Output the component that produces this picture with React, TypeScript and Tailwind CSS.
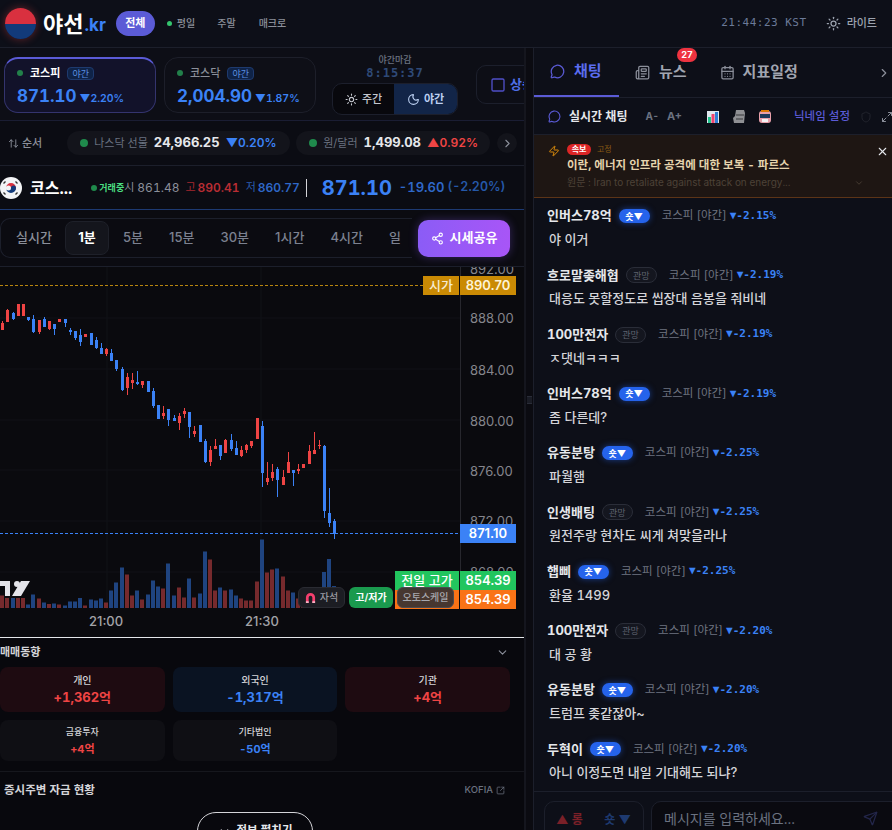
import React from 'react';
import {
  ArrowUpDown,
  CalendarDays,
  ChevronDown,
  ChevronRight,
  Maximize2,
  MessageCircle,
  Moon,
  Newspaper,
  Send,
  Share2,
  Shield,
  Square,
  SquareArrowOutUpRight,
  Sun,
  X,
  Zap,
} from 'lucide-react';

// [wick top, body top, body bottom, wick bottom, red?]
const candles: [number, number, number, number, number][] = [
  [322, 324, 331, 331, 1], [310, 311, 323, 323, 1], [313, 314, 320, 321, 0], [305, 305, 317, 317, 1], [305, 305, 317, 317, 1],
  [318, 318, 321, 322, 0], [316, 320, 333, 334, 0], [321, 321, 333, 335, 1], [318, 320, 328, 328, 0], [322, 322, 330, 331, 1],
  [325, 325, 330, 336, 0], [320, 320, 323, 323, 1], [320, 320, 324, 328, 0], [329, 331, 333, 336, 0], [332, 332, 339, 341, 0],
  [330, 336, 343, 347, 0], [335, 335, 338, 338, 1], [334, 334, 346, 346, 0], [338, 341, 349, 350, 0], [344, 349, 355, 355, 0],
  [349, 350, 355, 357, 1], [350, 354, 362, 362, 0], [361, 361, 370, 372, 0], [368, 370, 391, 392, 0], [374, 378, 389, 396, 1],
  [374, 381, 384, 390, 1], [372, 383, 385, 386, 0], [382, 382, 386, 389, 1], [382, 382, 393, 393, 0], [389, 392, 407, 409, 0],
  [406, 406, 420, 420, 0], [407, 414, 417, 420, 1], [410, 410, 421, 427, 0], [416, 419, 422, 422, 0], [414, 417, 424, 431, 1],
  [409, 412, 415, 419, 1], [413, 413, 428, 439, 0], [427, 432, 435, 438, 1], [426, 426, 443, 443, 0], [440, 442, 463, 464, 0],
  [447, 451, 463, 467, 1], [440, 447, 450, 450, 1], [446, 446, 457, 461, 0], [440, 441, 454, 454, 1], [435, 441, 450, 452, 0],
  [442, 449, 456, 456, 0], [447, 451, 457, 458, 1], [445, 446, 451, 454, 1], [442, 442, 447, 449, 1], [419, 419, 440, 440, 1],
  [422, 427, 474, 488, 0], [463, 479, 483, 486, 1], [465, 473, 479, 482, 1], [468, 470, 481, 498, 0], [471, 478, 486, 486, 1],
  [453, 463, 474, 474, 1], [471, 471, 474, 487, 0], [465, 470, 472, 475, 1], [465, 465, 469, 469, 1], [446, 452, 465, 465, 1],
  [433, 451, 455, 455, 1], [441, 446, 447, 450, 1], [446, 447, 512, 519, 0], [489, 514, 524, 528, 0], [520, 522, 535, 540, 0],
];

const volumes = [
  12.5, 10, 10, 10, 10, 3.5, 13.5, 9.5, 5.5, 4, 4.5, 3.5, 2.5, 6.5, 6.5, 10, 2.5, 8.5, 7.5, 9.5, 5.5, 17.5, 25.5, 40.5, 33.5, 12.5,
  17.5, 8.5, 13.5, 27.5, 21.5, 19.5, 44.5, 12.5, 20.5, 10.5, 29.5, 10.5, 14.5, 56.5, 48.5, 17.5, 20.5, 17.5, 18.5, 12.5, 9.5, 7.5,
  7.5, 26.5, 68.5, 35.5, 38.5, 39.5, 31.5, 17.5, 15.5, 9.5, 8, 5, 8, 6, 36, 49, 22,
];
const volumeColors = 'rrbrrbbrbrbrbbbbrbbbrbbbrrbrbbbrbbrrbrbbrrbrbbrrrrbrrbrrbrrrrrbbb';

const priceLabels = [
  ['892.00', 273],
  ['888.00', 322],
  ['884.00', 374],
  ['880.00', 425],
  ['876.00', 475],
  ['872.00', 525],
  ['868.00', 576],
];

const intervals = ['5분', '15분', '30분', '1시간', '4시간', '일'];

const chats = [
  { name: '인버스78억', pos: 'short', pct: '▼-2.15%', msg: '야 이거' },
  { name: '흐로말좆해협', pos: 'watch', pct: '▼-2.19%', msg: '대응도 못할정도로 씹장대 음봉을 줘비네' },
  { name: '100만전자', pos: 'watch', pct: '▼-2.19%', msg: 'ㅈ댓네ㅋㅋㅋ' },
  { name: '인버스78억', pos: 'short', pct: '▼-2.19%', msg: '좀 다른데?' },
  { name: '유동분탕', pos: 'short', pct: '▼-2.25%', msg: '파월햄' },
  { name: '인생배팅', pos: 'watch', pct: '▼-2.25%', msg: '원전주랑 현차도 씨게 쳐맞을라나' },
  { name: '햅삐', pos: 'short', pct: '▼-2.25%', msg: '환율 1499' },
  { name: '100만전자', pos: 'watch', pct: '▼-2.20%', msg: '대 공 황' },
  { name: '유동분탕', pos: 'short', pct: '▼-2.20%', msg: '트럼프 좆같잖아~' },
  { name: '두혁이', pos: 'short', pct: '▼-2.20%', msg: '아니 이정도면 내일 기대해도 되냐?' },
];

const Chart = () => (
  <div className="relative h-[370px] shrink-0 overflow-hidden bg-[#0a0a0e] [font-variant-numeric:normal]">
    <svg className="absolute inset-0" width="526" height="370" viewBox="0 268 526 370">
      {[319, 370, 421, 471, 522, 573].map((y) => (
        <line key={y} x1="0" x2="460" y1={y} y2={y} stroke="#101116" />
      ))}
      {[107, 261].map((x) => (
        <line key={x} x1={x} x2={x} y1="268" y2="610" stroke="#111217" />
      ))}
      <line x1="460.5" x2="460.5" y1="268" y2="610" stroke="#27272d" />
      <line x1="0" x2="423" y1="286.5" y2="286.5" stroke="#b9860f" strokeDasharray="3 2" />
      <line x1="0" x2="460" y1="534.5" y2="534.5" stroke="#3b82f6" strokeDasharray="3 2" />
      {volumes.map((h, i) => (
        <rect
          key={i}
          x={Math.round(2.3 + 5.19 * i) - 2}
          y={609 - h}
          width="4"
          height={h}
          fill={volumeColors[i] === 'r' ? '#762a2d' : '#1f4480'}
        />
      ))}
      {candles.map(([wt, bt, bb, wb, red], i) => {
        const x = Math.round(2.3 + 5.19 * i);
        const color = red ? '#ef4444' : '#3b82f6';
        return (
          <g key={i}>
            <rect x={x} y={wt} width="1" height={wb - wt} fill={color} />
            <rect x={x - 1} y={bt} width="3" height={bb - bt} fill={color} />
          </g>
        );
      })}
      {/* tradingview mark */}
      <path d="M0 582h10v15H5v-10H0z" fill="#e4e4ea" />
      <circle cx="17" cy="585" r="3" fill="#e4e4ea" />
      <path d="M21 582h9l-9 15h-9z" fill="#e4e4ea" />
    </svg>

    {priceLabels.map(([label, y]) => (
      <span
        key={label}
        className="absolute left-[470px] text-[13px] leading-[16px] text-[#85858c]"
        style={{ top: (y as number) - 268 - 11 }}
      >
        {label}
      </span>
    ))}

    <span className="absolute left-[89px] top-[346px] text-[13px] font-medium leading-[16px] text-[#a3a3a8]">21:00</span>
    <span className="absolute left-[245px] top-[346px] text-[13px] font-medium leading-[16px] text-[#a3a3a8]">21:30</span>

    <div className="absolute left-[423px] top-[9px] flex">
      <span className="flex h-[19px] w-[36px] items-center justify-center bg-[#ca8a04] text-[13px] font-medium text-[#f7ecd0]">시가</span>
      <span className="ml-px flex h-[19px] w-[56px] items-center justify-center bg-[#ca8a04] text-[13px] font-semibold text-[#fdf3d6]">890.70</span>
    </div>
    <span className="absolute left-[460px] top-[257px] flex h-[19px] w-[56px] items-center justify-center bg-[#3b82f6] text-[13px] font-semibold text-white">871.10</span>
    <div className="absolute left-[395px] top-[304px] flex">
      <span className="flex h-[19px] w-[64px] items-center justify-center bg-[#22c55e] text-[13px] font-medium text-white">전일 고가</span>
      <span className="ml-px flex h-[19px] w-[56px] items-center justify-center bg-[#22c55e] text-[13px] font-semibold text-white">854.39</span>
    </div>
    <div className="absolute left-[395px] top-[323px] flex">
      <span className="h-[19px] w-[64px] bg-[#f97316]" />
      <span className="ml-px flex h-[19px] w-[56px] items-center justify-center bg-[#f97316] text-[13px] font-semibold text-white">854.39</span>
    </div>

    <div className="absolute left-[298px] top-[320px] flex gap-1">
      <div className="flex h-[21px] w-[47px] items-center justify-center gap-1 rounded-md border border-[#2a2b32] bg-[#1c1d23] text-[10px] font-medium text-[#9a9aa2]">
        <svg width="11" height="11" viewBox="0 0 12 12">
          <path d="M1 12V6a5 5 0 0 1 10 0v6H8V6a2 2 0 0 0-4 0v6z" fill="#f43f6e" />
          <path d="M1 12V10h3v2zM8 12v-2h3v2z" fill="#f8b4c6" />
        </svg>
        자석
      </div>
      <div className="flex h-[21px] w-[44px] items-center justify-center rounded-md bg-[#1a9a4e] text-[10px] font-semibold text-white">고/저가</div>
      <div className="flex h-[21px] w-[57px] items-center justify-center rounded-md border border-[#4a4a50] bg-[#3d3431]/95 text-[10px] font-medium text-[#a8a8ae]">오토스케일</div>
    </div>
  </div>
);

const MarketCard = ({ name, value, pct, active }: { name: string; value: string; pct: string; active?: boolean }) => (
  <div
    className={
      active
        ? 'h-[56px] w-[152px] shrink-0 rounded-[14px] border border-[#34346e] border-t-2 border-t-[#5b5bd6] bg-[#12122a] pl-[12px] pt-[6px]'
        : 'h-[56px] w-[152px] shrink-0 rounded-[14px] border border-[#1d1f2a] bg-[#0e0f17] pl-[12px] pt-[7px]'
    }
  >
    <div className="flex items-center">
      <span className="mr-[7px] h-[6px] w-[6px] rounded-full bg-[#22804a]" />
      <span className={active ? 'text-[11px] font-bold text-white' : 'text-[11px] font-medium text-[#8b8f9a]'}>{name}</span>
      <span className="ml-[7px] rounded-[4px] border border-[#1e3a6e] bg-[#0f2347] px-[4px] text-[9px] leading-[11px] text-[#5b8fe0]">야간</span>
    </div>
    <div className="mt-[3px] flex items-baseline">
      <span className="text-[17px] font-bold leading-[22px] text-[#3b82f6]">{value}</span>
      <span className="ml-[3px] text-[10.5px] font-semibold text-[#3b82f6]">▼{pct}</span>
    </div>
  </div>
);

const Trade = ({ label, value, tone, small }: { label: string; value: string; tone: string; small?: boolean }) => (
  <div
    className={
      (small ? 'h-[41px] bg-[#0f0f14] ' : tone === 'red' ? 'h-[45px] bg-[#1e0b11] ' : 'h-[45px] bg-[#0a1322] ') +
      'flex flex-col items-center rounded-[8px] ' +
      (small ? 'pt-[5px]' : 'pt-[6px]')
    }
  >
    <span className={small ? 'text-[9px] font-medium leading-[14px] text-[#d4d4d8]' : 'text-[10px] font-medium leading-[14px] text-[#d4d4d8]'}>{label}</span>
    <span
      className={
        (small ? 'mt-[1px] text-[11px] ' : 'mt-[1px] text-[13px] ') +
        'font-bold leading-[18px] ' +
        (tone === 'red' ? 'text-[#ef4444]' : 'text-[#3b82f6]')
      }
    >
      {value}
    </span>
  </div>
);

const ChatRow = ({ name, pos, pct, msg }: { name: string; pos: string; pct: string; msg: string }) => (
  <div className="h-[59.25px] shrink-0 pl-[13px] pt-[1px]">
    <div className="flex h-[18px] items-center">
      <span className="text-[13px] font-bold text-[#e5e7eb]">{name}</span>
      {pos === 'short' ? (
        <span className="ml-[7px] flex h-[14px] w-[31px] items-center justify-center rounded-full bg-[#2563eb] text-[9px] font-bold leading-none text-white shadow-[0_0_6px_#2563eb88]">숏▼</span>
      ) : (
        <span className="ml-[7px] flex h-[16px] w-[31px] items-center justify-center rounded-full border border-[#2a2d38] bg-[#14161f] text-[9px] leading-none text-[#5f6370]">관망</span>
      )}
      <span className="ml-[12px] text-[11.5px] text-[#6f7480]">코스피 [야간]</span>
      <span className="ml-[3px] font-['DejaVu_Sans_Mono',monospace] text-[11px] font-bold text-[#3b82f6]">{pct}</span>
    </div>
    <p className="mt-[5px] pl-[2px] text-[13px] font-medium leading-[18px] text-[#d4d4d8]">{msg}</p>
  </div>
);

export default function App() {
  return (
    <div className="flex h-[830px] w-[892px] flex-col overflow-hidden bg-[#0a0a0f] font-['Inter','Noto_Sans_CJK_KR',sans-serif] tabular-nums">
      {/* Top bar */}
      <header className="flex h-[48px] shrink-0 items-center border-b border-[#1c1f2b] bg-[#0d0f18] pl-[5px] pr-[15px]">
        <div className="h-[31px] w-[31px] overflow-hidden rounded-full shadow-[0_0_8px_#ef444466]">
          <div className="h-1/2 bg-[#d9303f]" />
          <div className="h-1/2 bg-[#123a7a]" />
        </div>
        <span className="ml-[7px] text-[22px] font-bold leading-none text-white">야선</span>
        <span className="ml-[1px] mt-[4px] text-[17px] font-bold leading-none text-[#3b82f6]">.kr</span>
        <span className="ml-[10px] flex h-[25px] w-[39px] items-center justify-center rounded-full bg-[#5b5bd6] text-[11px] font-bold text-white">전체</span>
        <span className="ml-[12px] h-[5px] w-[5px] rounded-full bg-[#34c46e]" />
        <span className="ml-[5px] text-[10px] font-medium text-[#8b8f9a]">평일</span>
        <span className="ml-[22px] text-[10px] font-medium text-[#8b8f9a]">주말</span>
        <span className="ml-[23px] text-[10px] font-medium text-[#8b8f9a]">매크로</span>
        <span className="ml-auto font-['DejaVu_Sans_Mono',monospace] text-[11px] tracking-[0.5px] text-[#6b7a99]">21:44:23 KST</span>
        <Sun size={15} className="ml-[19px] text-[#9ca3af]" />
        <span className="ml-[6px] text-[11px] font-medium text-[#9ca3af]">라이트</span>
      </header>

      <div className="flex min-h-0 flex-1">
        {/* Left column */}
        <div className="flex w-[526px] shrink-0 flex-col overflow-hidden border-r-2 border-[#15161e]">
          <div className="flex h-[73px] shrink-0 items-start gap-[8px] border-b border-[#1a1d33] bg-[#0d0e16] pl-[4px] pt-[9px]">
            <MarketCard name="코스피" value="871.10" pct="2.20%" active />
            <MarketCard name="코스닥" value="2,004.90" pct="1.87%" />
            <div className="ml-[8px] flex w-[126px] shrink-0 flex-col items-center">
              <span className="mt-[-3px] text-[9px] font-medium leading-[12px] text-[#6b7280]">야간마감</span>
              <span className="font-['DejaVu_Sans_Mono',monospace] text-[12px] font-bold leading-[15px] tracking-[1px] text-[#2f4a78]">8:15:37</span>
              <div className="mt-[2px] flex h-[32px] w-[126px] items-center overflow-hidden rounded-[10px] border border-[#1c1f2c] bg-[#08080d]">
                <span className="flex w-[61px] items-center justify-center gap-[4px] text-[11px] font-medium text-[#c4c7cf]">
                  <Sun size={13} />
                  주간
                </span>
                <span className="flex h-full flex-1 items-center justify-center gap-[4px] bg-[#122548] text-[11px] font-bold text-[#bcd0f2]">
                  <Moon size={13} />
                  야간
                </span>
              </div>
            </div>
            <div className="ml-[10px] mt-[8px] flex h-[39px] w-[80px] shrink-0 items-center rounded-l-[10px] border border-[#1c1f2c] pl-[13px]">
              <Square size={16} className="shrink-0 text-[#4f4fc8]" />
              <span className="ml-[4px] whitespace-nowrap text-[13px] font-bold text-[#4f6fe8]">상승</span>
            </div>
          </div>

          <div className="flex h-[45px] shrink-0 items-center border-b border-[#1c1f2b] bg-[#0b0c13] pl-[8px]">
            <ArrowUpDown size={11} className="text-[#8b8f9a]" />
            <span className="ml-[3px] text-[11px] font-medium text-[#8b8f9a]">순서</span>
            <div className="ml-[25px] flex h-[24px] w-[223px] shrink-0 items-center rounded-full bg-[#13141b] pl-[13px]">
              <span className="h-[8px] w-[8px] rounded-full bg-[#1f8a4c]" />
              <span className="ml-[6px] text-[11px] text-[#6b7280]">나스닥 선물</span>
              <span className="ml-[6px] text-[13px] font-bold text-[#e5e7eb]">24,966.25</span>
              <span className="ml-[6px] text-[12px] font-semibold text-[#3b82f6]">▼0.20%</span>
            </div>
            <div className="ml-[6px] flex h-[24px] w-[194px] shrink-0 items-center rounded-full bg-[#13141b] pl-[13px]">
              <span className="h-[8px] w-[8px] rounded-full bg-[#1f8a4c]" />
              <span className="ml-[6px] text-[11px] text-[#6b7280]">원/달러</span>
              <span className="ml-[6px] text-[13px] font-bold text-[#e5e7eb]">1,499.08</span>
              <span className="ml-[6px] text-[12px] font-semibold text-[#ef4444]">▲0.92%</span>
            </div>
            <span className="ml-[7px] flex h-[20px] w-[20px] items-center justify-center rounded-full bg-[#13141b]">
              <ChevronRight size={13} className="text-[#8b8f9a]" />
            </span>
          </div>

          <div className="flex h-[44px] shrink-0 items-center border-b border-[#1d3a73] bg-[#0b0c13]">
            <svg width="22" height="22" viewBox="0 0 22 22" className="shrink-0">
              <circle cx="11" cy="11" r="11" fill="#f3f4f6" />
              <path d="M6 11a5 5 0 0 1 10 0a2.5 2.5 0 0 1-5 0a2.5 2.5 0 0 0-5 0z" fill="#d9303f" />
              <path d="M6 11a2.5 2.5 0 0 0 5 0a2.5 2.5 0 0 1 5 0a5 5 0 0 1-10 0z" fill="#123a7a" />
              <path d="M3.5 6.5l2 -2M15.5 4.5l2 2M3.5 15.5l2 2M17.5 15.5l-2 2" stroke="#333" strokeWidth="1.4" />
            </svg>
            <span className="ml-[8px] text-[16px] font-bold text-white">코스...</span>
            <span className="ml-[19px] h-[6px] w-[6px] rounded-full bg-[#1f8a4c]" />
            <span className="ml-[2px] text-[9px] font-bold text-[#4ade80]">거래중</span>
            <span className="text-[11px] text-[#8b8f9a]">시</span>
            <span className="ml-[3px] text-[12px] text-[#8b8f9a]">861.48</span>
            <span className="ml-[6px] text-[11px] text-[#a3272e]">고</span>
            <span className="ml-[2px] text-[12px] font-semibold text-[#b92d33]">890.41</span>
            <span className="ml-[6px] text-[11px] text-[#2a5cb0]">저</span>
            <span className="ml-[2px] text-[12px] font-semibold text-[#2f68c8]">860.77</span>
            <span className="ml-[6px] h-[18px] w-px bg-[#d4d4d8]" />
            <span className="ml-[15px] text-[20px] font-bold text-[#3b82f6]">871.10</span>
            <span className="ml-[7px] text-[13px] font-semibold text-[#2f68c8]">-19.60</span>
            <span className="ml-[3px] text-[12.5px] font-semibold text-[#2558a8]">(-2.20%)</span>
          </div>

          <div className="flex h-[57px] shrink-0 items-center border-b border-[#1c1f2b] bg-[#0b0b11] [font-variant-numeric:normal]">
            <div className="flex h-[40px] w-[412px] shrink-0 items-center rounded-l-[10px] border-y border-l border-[#1c1f2b] pl-[15px]">
              <span className="w-[49px] text-[13px] font-medium text-[#8b8f9a]">실시간</span>
              <span className="flex h-[34px] w-[44px] items-center justify-center rounded-[8px] border border-[#1e2029] bg-[#14151c] text-[13px] font-bold text-white">1분</span>
              <div className="ml-[14px] flex w-[278px] items-center justify-between">
                {intervals.map((label) => (
                  <span key={label} className="text-[13px] font-medium text-[#7c8190]">{label}</span>
                ))}
              </div>
            </div>
            <button className="ml-[6px] flex h-[37px] w-[92px] shrink-0 items-center justify-center gap-[6px] rounded-[10px] bg-gradient-to-r from-[#8b5cf6] to-[#a855f7] text-[13px] font-bold text-white shadow-[0_0_10px_#8b5cf655]">
              <Share2 size={13} />
              시세공유
            </button>
          </div>

          <Chart />

          <div className="shrink-0 border-t border-[#e5e7eb] bg-[#08080d]">
            <div className="flex h-[28px] items-center justify-between pr-[15px]">
              <span className="text-[11px] font-bold text-[#d4d4d8]">매매동향</span>
              <ChevronDown size={13} className="text-[#8b8f9a]" />
            </div>
            <div className="mt-[1px] grid w-[510px] grid-cols-3 gap-x-[8px] gap-y-[8px]">
              <Trade label="개인" value="+1,362억" tone="red" />
              <Trade label="외국인" value="-1,317억" tone="blue" />
              <Trade label="기관" value="+4억" tone="red" />
              <Trade label="금융투자" value="+4억" tone="red" small />
              <Trade label="기타법인" value="-50억" tone="blue" small />
            </div>
            <div className="mt-[10px] flex h-[36px] items-center justify-between border-t border-[#16171d] pl-[4px] pr-[19px] pt-[2px]">
              <span className="text-[11.5px] font-bold text-[#d4d4d8]">증시주변 자금 현황</span>
              <span className="flex items-center gap-[3px] text-[9.5px] font-medium text-[#6b7280]">
                KOFIA
                <SquareArrowOutUpRight size={9} />
              </span>
            </div>
            <div className="mt-[5px] flex justify-center pr-[14px]">
              <button className="flex h-[38px] w-[116px] items-center justify-center gap-[6px] rounded-[20px] border border-[#d4d4d8] text-[11.5px] font-bold text-[#e5e7eb]">
                <ChevronDown size={13} />
                정보 펼치기
              </button>
            </div>
          </div>
        </div>

        {/* Splitter */}
        <div className="flex w-[7px] shrink-0 items-center justify-center bg-[#0b0b11]">
          <span className="mt-[-79px] h-[8px] w-[5px] border-y border-[#2a2d38] bg-[#1a1c25]" />
        </div>

        {/* Chat column */}
        <div className="flex min-w-0 flex-1 flex-col border-l border-[#1c1f2b] bg-[#0d0f18]">
          <div className="relative flex h-[50px] shrink-0 items-center border-b border-[#1c1f2b]">
            <div className="flex h-full w-[85px] items-center border-b-2 border-[#5b5bd6] pl-[16px]">
              <MessageCircle size={15} className="text-[#5b5bd6]" />
              <span className="ml-[9px] text-[15px] font-bold text-[#5b6df0]">채팅</span>
            </div>
            <Newspaper size={15} className="ml-[16px] text-[#8b8f9a]" />
            <span className="ml-[9px] text-[15px] font-bold text-[#a1a5b0]">뉴스</span>
            <span className="absolute left-[143px] top-0 flex h-[14px] w-[20px] items-center justify-center rounded-full bg-[#ef3340] text-[9px] font-bold text-white">27</span>
            <CalendarDays size={15} className="ml-[33px] text-[#8b8f9a]" />
            <span className="ml-[8px] text-[15px] font-bold text-[#a1a5b0]">지표일정</span>
            <ChevronRight size={14} className="ml-auto mr-[1px] text-[#8b8f9a]" />
          </div>

          <div className="flex h-[36px] shrink-0 items-center whitespace-nowrap pl-[14px] pt-[1px]">
            <MessageCircle size={13} className="shrink-0 text-[#5b5bd6]" />
            <span className="ml-[8px] text-[12px] font-bold text-[#e5e7eb]">실시간 채팅</span>
            <span className="ml-[18px] text-[10px] font-bold text-[#6b7280]">A-</span>
            <span className="ml-[8px] text-[11px] font-bold text-[#6b7280]">A+</span>
            <svg width="12" height="12" viewBox="0 0 12 12" className="ml-[25px] shrink-0">
              <rect width="12" height="12" fill="#dfe7ee" />
              <rect x="1" y="6" width="3" height="6" fill="#22c58e" />
              <rect x="4.5" y="3" width="3" height="9" fill="#ef4470" />
              <rect x="8" y="1" width="3" height="11" fill="#2f7fd6" />
            </svg>
            <svg width="12" height="13" viewBox="0 0 12 13" className="ml-[14px] shrink-0">
              <path d="M3 0h8l1 3-1 10H1L0 8l2-2z" fill="#8f9094" />
              <path d="M3 5h8M3 9h7" stroke="#55565a" strokeWidth="1.4" />
            </svg>
            <svg width="12" height="13" viewBox="0 0 12 13" className="ml-[14px] shrink-0">
              <rect y="1" width="12" height="12" rx="3" fill="#e8a0aa" />
              <rect x="1" y="4" width="10" height="4" fill="#1d3a5c" />
              <rect x="3" y="9" width="6" height="3" fill="#f3f4f6" />
              <rect x="2" y="0" width="8" height="2" fill="#d97706" />
            </svg>
            <span className="ml-[23px] text-[11.5px] font-medium text-[#5b5bd6]">닉네임 설정</span>
            <Shield size={12} className="ml-[10px] shrink-0 text-[#22242d]" />
            <Maximize2 size={12} className="ml-[9px] shrink-0 text-[#8b8f9a]" />
          </div>

          <div className="relative h-[64px] shrink-0 border-b border-[#5c3417] border-t border-t-[#1c1f2b] bg-[#1e1613] pl-[33px] pt-[8px]">
            <Zap size={12} className="absolute left-[14px] top-[10px] text-[#d98a0b]" />
            <div className="flex h-[12px] items-center">
              <span className="flex h-[11px] w-[24px] items-center justify-center rounded-full bg-[#dc2626] text-[8px] font-bold leading-none text-white">속보</span>
              <span className="ml-[6px] text-[8px] text-[#8a5a14]">고정</span>
            </div>
            <p className="mt-[2px] text-[11.5px] font-bold leading-[17px] text-[#e5d3ad]">이란, 에너지 인프라 공격에 대한 보복 - 파르스</p>
            <p className="mt-[1px] text-[10px] leading-[14px] text-[#4d4237]">원문 : Iran to retaliate against attack on energy...</p>
            <ChevronDown size={10} className="absolute left-[320px] top-[43px] text-[#4d4237]" />
            <X size={13} className="absolute right-[3px] top-[10px] text-[#e5e7eb]" />
          </div>

          <div className="flex min-h-0 flex-1 flex-col overflow-hidden pt-[8px]">
            {chats.map((c, i) => (
              <ChatRow key={i} {...c} />
            ))}
          </div>

          <div className="flex h-[39px] shrink-0 gap-[7px] border-t border-[#1c1f2b] pl-[10px] pt-[9px]">
            <div className="flex h-[40px] w-[100px] shrink-0 justify-between rounded-[10px] border border-[#1c1f2b] pl-[11px] pr-[12px] pt-[9px] text-[12px] font-bold">
              <span className="text-[#7a2028]">▲ 롱</span>
              <span className="text-[#1e3a70]">숏 ▼</span>
            </div>
            <div className="flex h-[40px] w-[260px] shrink-0 justify-between rounded-[10px] border border-[#1c1f2b] bg-[#0a0a10] pl-[12px] pr-[32px] pt-[6px]">
              <span className="text-[14px] text-[#6b7280]">메시지를 입력하세요...</span>
              <Send size={15} className="mt-[3px] text-[#23264a]" />
            </div>
          </div>
        </div>
      </div>
    </div>
  );
}
